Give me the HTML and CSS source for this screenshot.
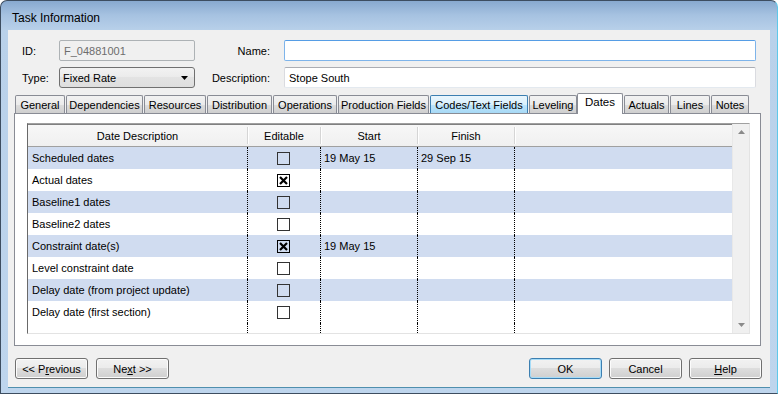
FILE: index.html
```html
<!DOCTYPE html>
<html>
<head>
<meta charset="utf-8">
<title>Task Information</title>
<link rel="stylesheet" href="styles.css">
</head>
<body>
<div class="window">
  <div class="titlebar">Task Information</div>
  <div class="client">
    <div class="fields">
      <div class="lbl">ID:</div>
      <div class="inp disabled">F_04881001</div>
      <div class="lbl lbl2">Name:</div>
      <div class="inp focus"></div>
      <div class="lbl">Type:</div>
      <div class="select"><span>Fixed Rate</span><svg class="arrow" width="7" height="4" viewBox="0 0 7 4"><path d="M0 0H7L3.5 4Z" fill="#000"/></svg></div>
      <div class="lbl lbl2">Description:</div>
      <div class="inp">Stope South</div>
    </div>

    <div class="tabs">
      <div class="tab">General</div>
      <div class="tab">Dependencies</div>
      <div class="tab">Resources</div>
      <div class="tab">Distribution</div>
      <div class="tab">Operations</div>
      <div class="tab">Production Fields</div>
      <div class="tab hover">Codes/Text Fields</div>
      <div class="tab">Leveling</div>
      <div class="tab selected">Dates</div>
      <div class="tab">Actuals</div>
      <div class="tab">Lines</div>
      <div class="tab">Notes</div>
    </div>

    <div class="panel">
      <div class="grid">
        <div class="table">
          <div class="head">
            <div class="hc">Date Description</div>
            <div class="hc">Editable</div>
            <div class="hc">Start</div>
            <div class="hc">Finish</div>
            <div class="hc last"></div>
          </div>
          <div class="row alt">
            <div class="c txt">Scheduled dates</div>
            <div class="c chk"><svg class="cb" viewBox="0 0 13 13"><rect x="0.5" y="0.5" width="12" height="12" fill="none" stroke="#333"/></svg></div>
            <div class="c dt">19 May 15</div>
            <div class="c dt">29 Sep 15</div>
            <div class="c last"></div>
          </div>
          <div class="row">
            <div class="c txt">Actual dates</div>
            <div class="c chk"><svg class="cb" viewBox="0 0 13 13"><rect x="0.5" y="0.5" width="12" height="12" fill="none" stroke="#000"/><path d="M3 3L10 10M10 3L3 10" stroke="#000" stroke-width="2.2"/></svg></div>
            <div class="c dt"></div>
            <div class="c dt"></div>
            <div class="c last"></div>
          </div>
          <div class="row alt">
            <div class="c txt">Baseline1 dates</div>
            <div class="c chk"><svg class="cb" viewBox="0 0 13 13"><rect x="0.5" y="0.5" width="12" height="12" fill="none" stroke="#333"/></svg></div>
            <div class="c dt"></div>
            <div class="c dt"></div>
            <div class="c last"></div>
          </div>
          <div class="row">
            <div class="c txt">Baseline2 dates</div>
            <div class="c chk"><svg class="cb" viewBox="0 0 13 13"><rect x="0.5" y="0.5" width="12" height="12" fill="none" stroke="#333"/></svg></div>
            <div class="c dt"></div>
            <div class="c dt"></div>
            <div class="c last"></div>
          </div>
          <div class="row alt">
            <div class="c txt">Constraint date(s)</div>
            <div class="c chk"><svg class="cb" viewBox="0 0 13 13"><rect x="0.5" y="0.5" width="12" height="12" fill="none" stroke="#000"/><path d="M3 3L10 10M10 3L3 10" stroke="#000" stroke-width="2.2"/></svg></div>
            <div class="c dt">19 May 15</div>
            <div class="c dt"></div>
            <div class="c last"></div>
          </div>
          <div class="row">
            <div class="c txt">Level constraint date</div>
            <div class="c chk"><svg class="cb" viewBox="0 0 13 13"><rect x="0.5" y="0.5" width="12" height="12" fill="none" stroke="#333"/></svg></div>
            <div class="c dt"></div>
            <div class="c dt"></div>
            <div class="c last"></div>
          </div>
          <div class="row alt">
            <div class="c txt">Delay date (from project update)</div>
            <div class="c chk"><svg class="cb" viewBox="0 0 13 13"><rect x="0.5" y="0.5" width="12" height="12" fill="none" stroke="#333"/></svg></div>
            <div class="c dt"></div>
            <div class="c dt"></div>
            <div class="c last"></div>
          </div>
          <div class="row">
            <div class="c txt">Delay date (first section)</div>
            <div class="c chk"><svg class="cb" viewBox="0 0 13 13"><rect x="0.5" y="0.5" width="12" height="12" fill="none" stroke="#333"/></svg></div>
            <div class="c dt"></div>
            <div class="c dt"></div>
            <div class="c last"></div>
          </div>
          <div class="row filler">
            <div class="c"></div>
            <div class="c"></div>
            <div class="c"></div>
            <div class="c"></div>
            <div class="c last"></div>
          </div>
        </div>
        <div class="scrollbar">
          <svg class="sarrow" width="7" height="4" viewBox="0 0 7 4"><path d="M3.5 0L7 4H0Z" fill="#8a8a8a"/></svg>
          <svg class="sarrow" width="7" height="4" viewBox="0 0 7 4"><path d="M0 0H7L3.5 4Z" fill="#8a8a8a"/></svg>
        </div>
      </div>
    </div>

    <div class="buttons">
      <div class="btn">&lt;&lt; P<u>r</u>evious</div>
      <div class="btn">Ne<u>x</u>t &gt;&gt;</div>
      <div class="spacer"></div>
      <div class="btn default">OK</div>
      <div class="btn">Cancel</div>
      <div class="btn"><u>H</u>elp</div>
    </div>
  </div>
</div>
</body>
</html>
```

FILE: styles.css
```css
* { box-sizing: border-box; }

body {
  margin: 0;
  background: #ffffff;
  font-family: "Liberation Sans", Arial, sans-serif;
  font-size: 11px;
  color: #000;
}

.window {
  width: 778px;
  height: 394px;
  border: 1px solid #3d4d60;
  border-right-color: #5ec8ea;
  border-radius: 7px 7px 0 0;
  background: linear-gradient(#88a9cf 0, #a6c2e1 14px, #b9d1ea 30px, #bed5ed 100%);
  padding: 0 7px 6px 7px;
  display: flex;
  flex-direction: column;
}

.titlebar {
  height: 29px;
  padding: 5px 0 0 4px;
  display: flex;
  align-items: center;
  font-size: 12px;
  color: #000;
}

.client {
  flex: 1;
  background: #f0f0f0;
  display: flex;
  flex-direction: column;
  box-shadow: 0 1px 0 #4f8fae;
}

/* top fields */
.fields {
  display: grid;
  grid-template-columns: 37px 136px 89px 1fr;
  grid-template-rows: 21px 21px;
  row-gap: 6px;
  padding: 10px 14px 0 14px;
}

.lbl {
  display: flex;
  align-items: center;
}

.lbl2 {
  justify-content: flex-end;
  padding-right: 14px;
}

.inp {
  height: 21px;
  border: 1px solid #abadb3;
  border-left-color: #dadbe0;
  border-right-color: #dadbe0;
  border-bottom-color: #e3e9ef;
  border-radius: 2px;
  background: #fff;
  padding: 0 4px;
  display: flex;
  align-items: center;
}

.inp.disabled {
  background: #f0f0f0;
  border-color: #adb2b5;
  color: #6d6d6d;
}

.inp.focus {
  border-color: #7eb4ea;
  border-top-color: #569de5;
}

.select {
  height: 21px;
  border: 1px solid #707070;
  border-radius: 3px;
  background: linear-gradient(#f2f2f2, #ebebeb 50%, #e3e3e3 50%, #dedede);
  padding: 0 6px 0 3px;
  display: flex;
  align-items: center;
  justify-content: space-between;
}

.arrow { display: block; }

/* tabs */
.tabs {
  display: flex;
  align-items: flex-end;
  height: 20px;
  margin-top: 5px;
  padding-left: 7px;
}

.tab {
  height: 18px;
  border: 1px solid #898c95;
  border-bottom: none;
  border-radius: 2px 2px 0 0;
  background: linear-gradient(#f2f2f2, #ebebeb 50%, #dddddd 50%, #cfcfcf);
  margin-right: 1px;
  display: flex;
  align-items: center;
  justify-content: center;
  white-space: nowrap;
  padding-top: 1px;
}

.tab:nth-child(1) { width: 50px; }
.tab:nth-child(2) { width: 77px; }
.tab:nth-child(3) { width: 62px; }
.tab:nth-child(4) { width: 65px; }
.tab:nth-child(5) { width: 64px; }
.tab:nth-child(6) { width: 91px; }
.tab:nth-child(7) { width: 98px; }
.tab:nth-child(8) { width: 48px; margin-right: 0; }
.tab:nth-child(9) { width: 46px; }
.tab:nth-child(10) { width: 45px; }
.tab:nth-child(11) { width: 40px; }
.tab:nth-child(12) { width: 38px; }

.tab.hover {
  border-color: #3c7fb1;
  background: linear-gradient(#eaf6fd, #d9f0fc 50%, #bee6fd 50%, #a7d9f5);
}

.tab.selected {
  height: 21px;
  margin-bottom: -1px;
  background: #ffffff;
  position: relative;
  z-index: 2;
  padding-top: 0;
  padding-bottom: 4px;
  font-size: 11.5px;
}

/* panel */
.panel {
  margin-left: 6px;
  width: 747px;
  height: 233px;
  border: 1px solid #898c95;
  background: #fff;
  padding: 9px 10px 11px 12px;
}

.grid {
  height: 100%;
  display: flex;
  border-top: 1px solid #a0a0a0;
  border-left: 1px solid #696969;
  border-bottom: 1px solid #e3e3e3;
  border-right: 1px solid #e3e3e3;
  box-shadow: inset 0 1px 0 #808080;
}

.table {
  flex: 1;
  display: flex;
  flex-direction: column;
  padding-top: 1px;
}

.head {
  display: grid;
  grid-template-columns: 220px 73px 97px 97px 1fr;
  height: 22px;
  background: linear-gradient(#f7f7f7, #f0f0f0);
  border-bottom: 1px solid #a0a0a0;
}

.hc {
  display: flex;
  align-items: center;
  justify-content: center;
  border-right: 1px solid #d5d5d5;
  box-shadow: 1px 0 0 #ffffff;
  margin: 2px 0;
}

.hc.last { border-right: none; box-shadow: none; }

.row {
  display: grid;
  grid-template-columns: 220px 73px 97px 97px 1fr;
  height: 22px;
}

.row.alt { background: #d0dcf0; }

.row.filler { flex: 1; height: auto; }

.c {
  border-right: 1px dotted #000;
  display: flex;
  align-items: center;
  white-space: nowrap;
}

.c.last { border-right: none; }

.txt { padding-left: 4px; }
.dt { padding-left: 3px; }

.chk { justify-content: center; padding-right: 1px; }

.cb {
  width: 13px;
  height: 13px;
  display: block;
}

.scrollbar {
  width: 17px;
  background: #f0f0f0;
  border-left: 1px solid #e8e8e8;
  display: flex;
  flex-direction: column;
  justify-content: space-between;
  align-items: center;
  padding: 6px 0 6px;
}

.sarrow { display: block; }

/* buttons */
.buttons {
  display: flex;
  gap: 7px;
  margin: 12px 8px 0 7px;
}

.spacer { flex: 1; }

.btn {
  width: 73px;
  height: 21px;
  border: 1px solid #707070;
  border-radius: 3px;
  background: linear-gradient(#f2f2f2, #ebebeb 50%, #dddddd 50%, #cfcfcf);
  box-shadow: inset 0 0 0 1px #fcfcfc;
  display: flex;
  align-items: center;
  justify-content: center;
  white-space: nowrap;
}

.btn:nth-child(2) { margin-left: 1px; }

.btn.default {
  border-color: #3c7fb1;
  box-shadow: inset 0 0 0 1px #a6dcf8;
}
```
